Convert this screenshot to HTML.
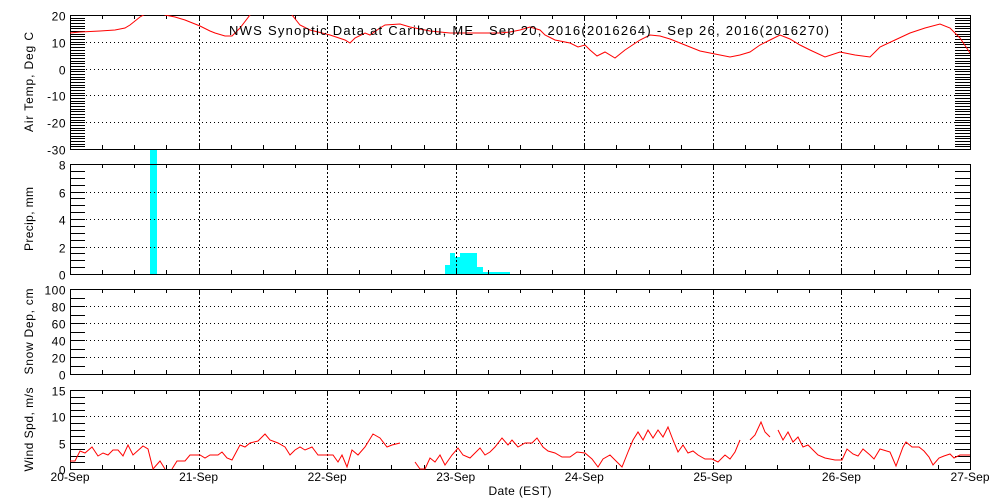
<!DOCTYPE html><html><head><style>body{margin:0;background:#fff}svg{display:block}text{font-family:"Liberation Sans",sans-serif;font-size:12px;fill:#000}</style></head><body>
<svg id="s" width="1000" height="500" xmlns="http://www.w3.org/2000/svg"></svg>
<script>
const s=document.getElementById('s');let h='';
const X0=70,X1=970,D=900/7;
const P=[{t:15,b:149,lo:-30,hi:20,maj:10,min:1,lab:'Air Temp, Deg C',tl:100},
{t:164,b:274,lo:0,hi:8,maj:2,min:0.5,lab:'Precip, mm',tl:64},
{t:289,b:374,lo:0,hi:100,maj:20,min:10,lab:'Snow Dep, cm',tl:86},
{t:390,b:469,lo:0,hi:15,maj:5,min:1.25,lab:'Wind Spd, m/s',tl:84}];
function L(a,b,c,d,st){h+=`<line x1="${a}" y1="${b}" x2="${c}" y2="${d}" stroke="#000" stroke-width="1" ${st||''}/>`}
h+=`<rect x="150" y="149" width="7" height="125" fill="#0ff"/>`;
[[445,265,5],[450,253,5],[455,257,5],[460,253,17],[477,267,6],[483,272,27]].forEach(r=>{h+=`<rect x="${r[0]}" y="${r[1]}" width="${r[2]}" height="${274-r[1]}" fill="#0ff"/>`});
P.forEach(p=>{const Y=v=>p.b-(v-p.lo)*(p.b-p.t)/(p.hi-p.lo);
h+=`<rect x="${X0+.5}" y="${p.t+.5}" width="${X1-X0}" height="${p.b-p.t}" fill="none" stroke="#000"/>`;
for(let v=p.lo;v<=p.hi+1e-6;v+=p.min){const y=Math.round(Y(v))+.5;L(X0,y,X0+15,y);L(X1-15,y,X1,y);}
for(let v=p.lo;v<=p.hi+1e-6;v+=p.maj){const y=Math.round(Y(v))+.5;
if(v>p.lo&&v<p.hi)L(X0,y,X1,y,'stroke-dasharray="1,3"');
h+=`<text x="66" y="${y+5}" text-anchor="end" letter-spacing="0.5">${v}</text>`;}
for(let d=1;d<7;d++){const x=Math.round(X0+d*D)+.5;L(x,p.t,x,p.b,'stroke-dasharray="2,2"');}
for(let q=1;q<28;q++){const x=Math.round(X0+q*D/4)+.5;L(x,p.t,x,p.t+4);L(x,p.b-4,x,p.b);}
const cy=(p.t+p.b)/2;h+=`<text x="33" y="${cy}" text-anchor="middle" textLength="${p.tl}" transform="rotate(-90 33 ${cy})">${p.lab}</text>`;});
['20-Sep','21-Sep','22-Sep','23-Sep','24-Sep','25-Sep','26-Sep','27-Sep'].forEach((t,i)=>{h+=`<text x="${X0+i*D}" y="481" text-anchor="middle" textLength="39">${t}</text>`});
h+=`<text x="520" y="495" text-anchor="middle" textLength="63">Date (EST)</text>`;
const T=[[70,33],[80,32],[100,31],[115,30],[125,28],[130,25],[140,17],[147,13],[152,10],[160,12],[165,15],[175,17],[185,20],[200,26],[210,31],[215,33],[225,36],[232,36],[240,28],[250,15],[258,8],[285,8],[292,15],[300,25],[310,30],[330,35],[345,40],[350,43],[355,38],[365,33],[370,35],[380,28],[385,25],[400,24],[410,27],[420,29],[430,31],[450,33],[470,33],[500,33],[510,32],[520,30],[530,27],[540,30],[545,35],[555,40],[570,43],[578,47],[585,45],[590,50],[597,56],[605,52],[615,58],[625,50],[640,40],[650,35],[660,36],[670,39],[685,45],[700,51],[715,54],[730,57],[740,55],[750,52],[760,45],[770,40],[780,35],[790,39],[800,45],[810,50],[825,57],[840,52],[855,55],[870,57],[880,47],[895,40],[910,33],[925,28],[940,24],[950,28],[960,38],[970,53]];
h+=`<defs><clipPath id="c1"><rect x="70" y="15" width="900" height="134"/></clipPath><clipPath id="c4"><rect x="70" y="390" width="900" height="80"/></clipPath></defs>`;
h+=`<polyline clip-path="url(#c1)" fill="none" stroke="#f00" points="${T.map(p=>p.join(',')).join(' ')}"/>`;
const W=[[[70,461],[75,461],[80,451],[85,453],[92,447],[98,456],[103,453],[108,455],[113,450],[118,450],[123,456],[128,445],[133,455],[143,446],[148,449],[153,469],[160,461],[165,469]],[[172,469],[177,461],[185,461],[190,455],[200,455],[205,458],[210,455],[218,455],[222,452],[227,458],[232,460],[240,445],[245,447],[250,443],[258,441],[265,434],[270,440],[278,443],[285,447],[290,455],[295,450],[300,447],[305,450],[312,447],[318,455],[325,455],[333,455],[338,462],[342,455],[347,467],[352,450],[358,455],[365,447],[373,434],[380,438],[387,447],[392,445],[400,443]],[[415,462],[420,469],[425,469],[430,458],[435,462],[440,455],[445,465],[452,455],[458,448],[463,455],[470,458],[475,453],[480,448],[485,455],[490,452],[495,447],[502,438],[508,445],[512,440],[518,447],[525,443],[532,443],[537,438],[543,447],[548,451],[555,453],[562,457],[570,457],[577,452],[585,453],[592,459],[598,467],[603,459],[610,455],[617,462],[622,467],[628,452],[633,440],[638,432],[643,440],[648,430],[653,438],[658,430],[663,437],[668,427],[673,440],[678,452],[683,445],[688,453],[693,451],[698,455],[705,459],[712,459],[718,462],[725,455],[730,459],[735,452],[740,440]],[[750,440],[755,435],[761,422],[765,432],[770,437]],[[778,430],[783,440],[788,432],[793,442],[798,437],[803,447],[808,445],[813,450],[818,455],[825,458],[835,460],[842,460],[847,449],[853,454],[858,456],[863,449],[870,455],[874,459],[880,449],[890,452],[896,466],[903,447],[906,442],[912,447],[919,447],[924,451],[929,457],[933,465],[939,458],[944,456],[950,454],[954,458],[960,455],[966,455],[970,455]]];
W.forEach(seg=>{h+=`<polyline clip-path="url(#c4)" fill="none" stroke="#f00" points="${seg.map(p=>p.join(',')).join(' ')}"/>`});
h+=`<text x="229" y="35" style="font-size:13px" textLength="600" lengthAdjust="spacing">NWS Synoptic Data at Caribou, ME&#160;&#160;&#160;Sep 20, 2016(2016264) - Sep 26, 2016(2016270)</text>`;
s.innerHTML=h;
</script></body></html>
